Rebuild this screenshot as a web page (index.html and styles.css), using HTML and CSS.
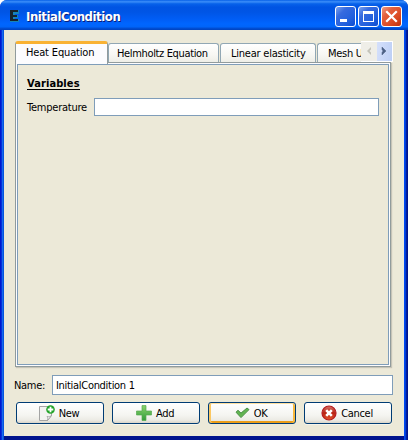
FILE: index.html
```html
<!DOCTYPE html>
<html lang="en">
<head>
<meta charset="utf-8">
<title>InitialCondition</title>
<link rel="stylesheet" href="styles.css">
</head>
<body>
<div class="window">
  <header class="titlebar">
    <svg class="app-icon" width="10" height="12" viewBox="0 0 10 12" shape-rendering="crispEdges"><path d="M1 0h9v4H6v1h3v3H6v1h4v3H1z" fill="#1684b8"/><path d="M1 0h8v2H4v3h4v2H4v2h5v2H1z" fill="#17232b"/></svg>
    <h1 class="title"><span>InitialCondition</span></h1>
    <button class="control" aria-label="Minimize"><svg width="21" height="21"><path d="M5 13h7v3H5z" fill="#fff"/></svg></button>
    <button class="control" aria-label="Maximize"><svg width="21" height="21"><path d="M5 5h11v11H5zM6 8v7h9V8z" fill="#fff" fill-rule="evenodd"/></svg></button>
    <button class="control close" aria-label="Close"><svg width="21" height="21"><path d="M6 6l9 9m0-9l-9 9" stroke="#fff" stroke-width="2.200" stroke-linecap="square"/></svg></button>
  </header>
  <main class="content">
    <div class="tabs">
      <div class="tab active"><span class="t-heat">Heat Equation</span></div>
      <div class="tab helm"><span class="t-helm">Helmholtz Equation</span></div>
      <div class="tab linear"><span class="t-linear">Linear elasticity</span></div>
      <div class="tab mesh"><span class="t-mesh">Mesh U</span></div>
      <div class="scroller">
        <button class="prev" aria-label="Previous tabs"><svg width="16" height="19"><path d="M6 9l4-4v2.500L8.500 9l1.500 1.500V13z" fill="#c3c2b8"/></svg></button>
        <button class="next" aria-label="Next tabs"><svg width="15" height="19"><path d="M5 5l4 4-4 4v-2.500L6 9 5 7.500z" fill="#4d6185" stroke="#4d6185" stroke-width=".5"/></svg></button>
      </div>
    </div>
    <section class="panel">
      <div class="pane">
        <h2 class="heading"><span>Variables</span></h2>
        <div class="field"><label class="t-temp">Temperature</label><div class="input"></div></div>
      </div>
    </section>
    <div class="name-row"><label class="t-name">Name:</label><div class="input"><span class="t-value">InitialCondition 1</span></div></div>
    <div class="actions">
      <button class="action"><svg width="16" height="16" viewBox="0 0 16 16"><path d="M.5 1.500h12v9l-4 5h-8z" fill="#f3f3f1" stroke="#a4a4a4"/><path d="M8.500 15.500c.5-2 .5-3-.5-4 2 .5 3 0 4.500-1z" fill="#fff" stroke="#999" stroke-width=".8"/><circle cx="11.500" cy="4.500" r="4.300" fill="#22a329"/><path d="M11.500 1.700v5.600M8.700 4.500h5.600" stroke="#fff" stroke-width="1.800"/></svg><span class="t-new">New</span></button>
      <button class="action"><svg width="16" height="16" viewBox="0 0 16 16"><defs><linearGradient id="g" x2="0" y2="1"><stop stop-color="#8bd36c"/><stop offset="1" stop-color="#329b3c"/></linearGradient></defs><path d="M6 .6h4V6h5.500v4H10v5.500H6V10H.5V6H6z" fill="url(#g)" stroke="#57a951" stroke-width=".7" stroke-linejoin="round"/></svg><span class="t-add">Add</span></button>
      <button class="action default"><svg width="15" height="12" viewBox="0 0 15 12"><path d="M1 5.200l2-1.900 3 2.800L12 1l2 1.600-8 8z" fill="#62b551" stroke="#4a8f46" stroke-linejoin="round"/></svg><span class="t-ok">OK</span></button>
      <button class="action"><svg width="16" height="16" viewBox="0 0 16 16"><defs><linearGradient id="r" x2="0" y2="1"><stop stop-color="#d77568"/><stop offset=".5" stop-color="#b92214"/><stop offset="1" stop-color="#e4572b"/></linearGradient></defs><circle cx="8" cy="8" r="7" fill="url(#r)" stroke="#b51c20" stroke-width="1.200"/><path d="M5.200 5.200l5.600 5.600m0-5.600l-5.600 5.600" stroke="#fff" stroke-width="2.600"/></svg><span class="t-cancel">Cancel</span></button>
    </div>
  </main>
</div>
</body>
</html>
```
FILE: styles.css
```css
* { box-sizing: border-box; }
body { margin: 0; background: #fff; font: 11px/13px "DejaVu Sans Condensed", "DejaVu Sans", sans-serif; font-stretch: condensed; color: #000; }
button { padding: 0; font: inherit; color: inherit; }
svg { display: block; flex: none; }
span, label { white-space: nowrap; letter-spacing: -.3px; }
.window { width: 408px; height: 440px; background: linear-gradient(90deg, #0019cf 0 1px, #0831d9 1px 2px, #166aee 2px 3px, #0855dd 3px 4px, #0855dd 4px 404px, #0048f1 404px 405px, #003dd7 405px 406px, #001ea0 406px 407px, #00138c 407px); border-radius: 7px 7px 0 0; overflow: hidden; }
.titlebar { height: 30px; display: flex; align-items: flex-start; padding: 6px 6px 0 9px; background: linear-gradient(#0058e4 0, #2b82f5 1px, #3c8cf8 2px, #1670ee 3px, #0761ea 4px, #0054e3 7px, #0055e5 12px, #005df5 19px, #0066ff 24px, #0064f8 27px, #0050d8 28px, #0042be 30px); }
.app-icon { margin-top: 4px; }
.title { flex: 1; margin: 3px 0 0 7px; color: #fff; font: bold 13px/16px "DejaVu Sans Condensed", sans-serif; text-shadow: 1px 1px #0b1f7c; }
.title span { letter-spacing: -.45px; }
.control { width: 21px; height: 21px; margin-left: 2px; border: 1px solid #fff; border-radius: 3px; background: linear-gradient(135deg, #7ba2ed, #376bdf 30%, #2260dd 70%, #0b4bd0); display: flex; overflow: hidden; }
.control svg { margin: -1px; }
.close { background: linear-gradient(135deg, #ee9b83, #e3603e 30%, #dc4b23 65%, #bd3210); }
.content { height: 410px; margin: 0 4px; border-bottom: 4px solid; border-image: linear-gradient(#0048f1 0 25%, #003dd7 25% 50%, #001ea0 50% 75%, #00138c 75%) 4 0 4 0; background: #ece9d8; padding: 11px 11px 0; }
.tabs { display: flex; align-items: flex-end; height: 21px; width: 378px; position: relative; z-index: 1; }
.tab { height: 19px; border: 1px solid #91a7b4; border-bottom: 0; border-radius: 3px 3px 0 0; background: linear-gradient(#fff, #f7f7f3 60%, #eeeee7); padding-top: 3px; flex: none; overflow: hidden; }
.active { width: 93px; height: 23px; margin-bottom: -2px; border-color: #919b9c; border-top: 3px solid #f9b233; background: #fcfcfe; padding: 2px 0 0 10px; }
.helm { width: 111px; padding-left: 8px; }
.linear { width: 96px; margin-left: 1px; padding-left: 10px; }
.mesh { width: 44px; margin-left: 1px; padding-left: 10px; border-right: 0; border-top-right-radius: 0; }
.scroller { display: flex; height: 21px; width: 32px; border: 1px solid #fff; border-left: 0; }
.scroller button { border: 0; height: 19px; overflow: hidden; }
.prev { width: 16px; background: #efeee8; }
.next { width: 15px; background: linear-gradient(100deg, #d5e0fb, #bdcff5); }
.panel { width: 376px; height: 305px; border: 1px solid #919b9c; padding: 1px; background: #fcfcfe; box-shadow: 1px 1px 1px #c6c4b7; }
.pane { height: 301px; border: 1px solid #7f9db9; background: #ece9d8; padding: 12px 9px; }
.heading { margin: 0; font: bold 11px/13px "DejaVu Sans Condensed", sans-serif; }
.heading span { display: inline-block; border-bottom: 1px solid #000; height: 13px; letter-spacing: .1px; }
.field { display: flex; align-items: center; margin-top: 7px; height: 20px; }
.field label { width: 67px; flex: none; }
.field .input { width: 285px; height: 18px; flex: none; }
.input { background: #fff; border: 1px solid #7f9db9; }
.name-row { display: flex; align-items: center; height: 20px; margin-top: 8px; }
.name-row label { width: 38px; margin-left: -1px; flex: none; }
.name-row .input { width: 341px; height: 20px; padding: 3px 0 0 3px; flex: none; }
.actions { display: flex; gap: 8px; margin: 7px 0 0 1px; }
.action { width: 88px; height: 22px; flex: none; border: 1px solid #003c74; border-radius: 3px; background: linear-gradient(#fff, #f5f5f1 60%, #ecebe5 85%, #d9d5c9); display: flex; align-items: center; justify-content: center; gap: 4px; padding-right: 2px; box-shadow: 0 1px #f6f4ea; }
.default { box-shadow: inset 0 1px #ffe0a0, inset 2px 0 #fbc761, inset -2px 0 #f8b93e, inset 0 -2px #eb9d18; }
.t-heat { letter-spacing: -.16px; }
.t-helm { letter-spacing: -.35px; }
.t-linear, .t-temp { letter-spacing: -.23px; }
```
